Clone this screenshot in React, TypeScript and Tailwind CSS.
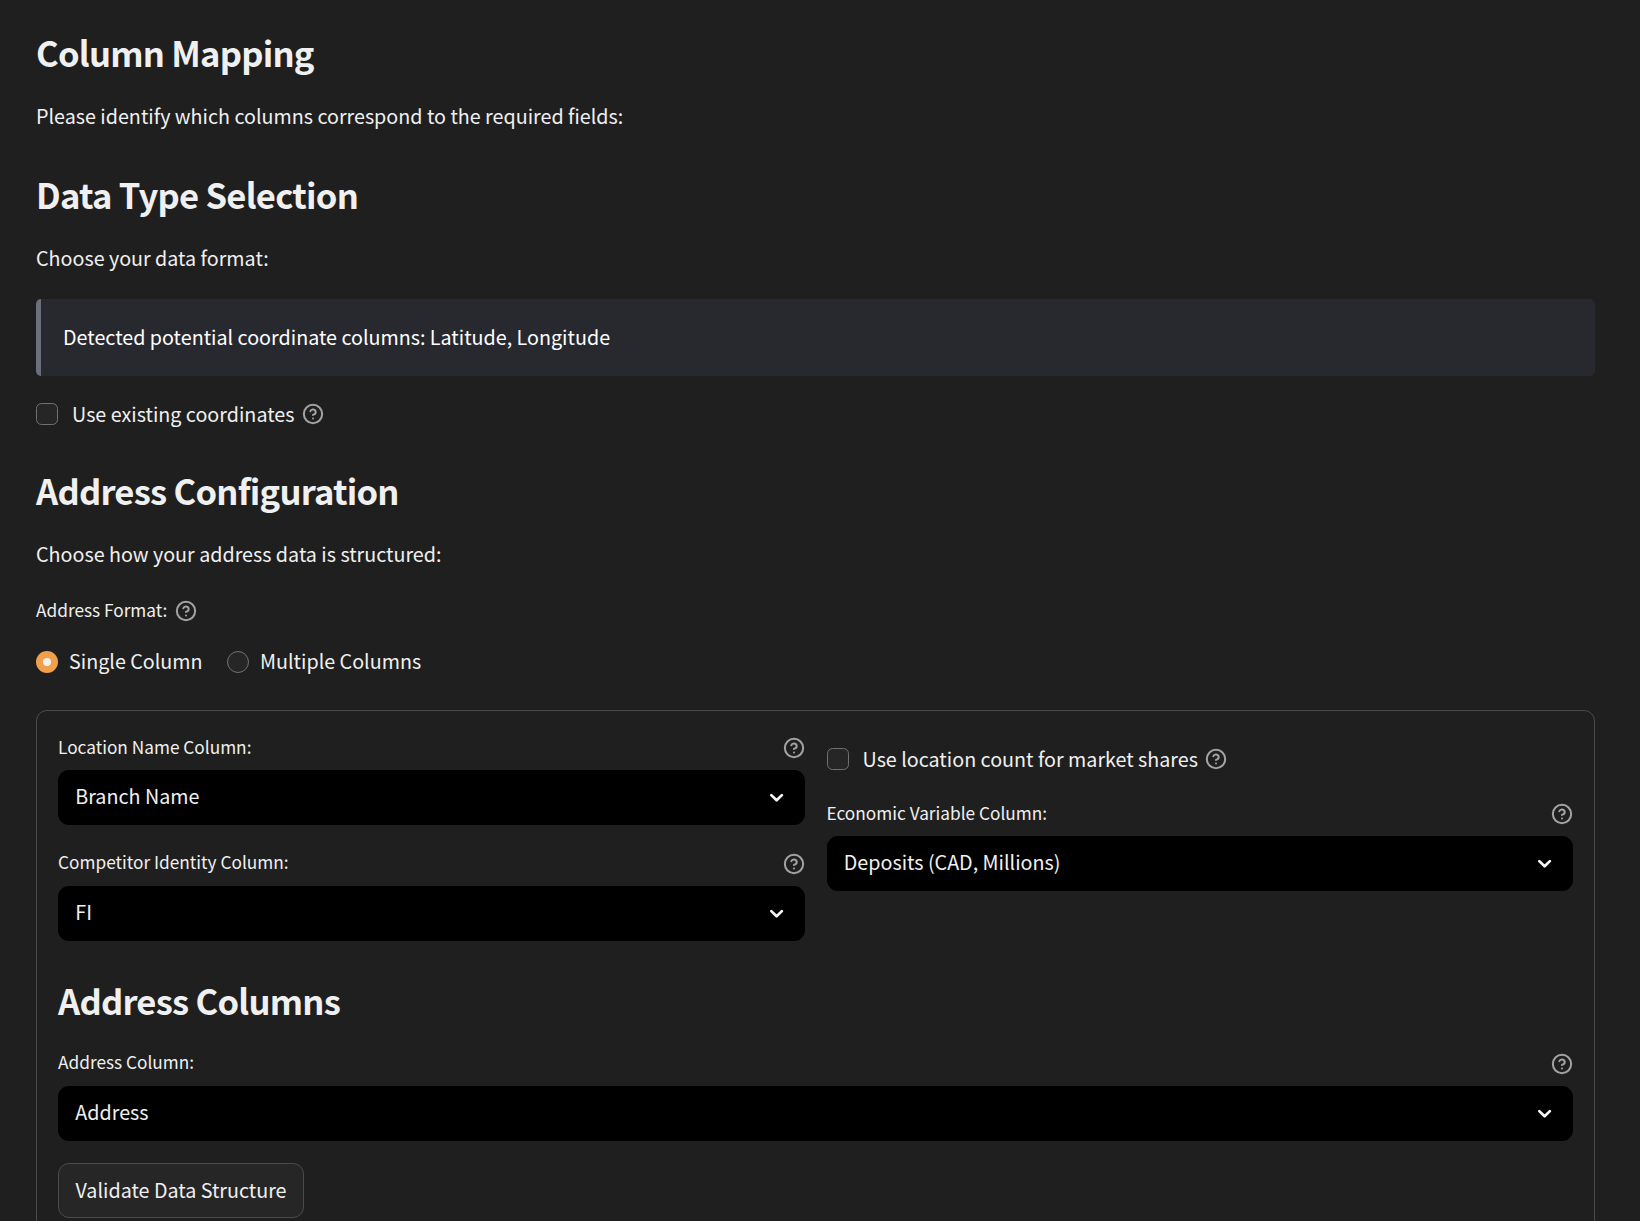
import type { ReactNode } from "react";

function HelpIcon() {
  return (
    <svg
      className="size-[22px] shrink-0 text-[#a3a3a3]"
      viewBox="0 0 24 24"
      fill="none"
      stroke="currentColor"
      strokeWidth="2.2"
      strokeLinecap="round"
      strokeLinejoin="round"
    >
      <circle cx="12" cy="12" r="10" />
      <path d="M9.09 9a3 3 0 0 1 5.83 1c0 2-3 3-3 3" />
      <path d="M12 17h.01" />
    </svg>
  );
}

function ChevronIcon() {
  return (
    <svg
      className="size-[22px] shrink-0 text-[#f5f5f5]"
      viewBox="0 0 22 22"
      fill="none"
      stroke="currentColor"
      strokeWidth="2.7"
      strokeLinecap="round"
      strokeLinejoin="round"
    >
      <path d="M5.3 8.1 10.6 13.3 15.9 8.1" />
    </svg>
  );
}

function Heading({ children, className }: { children: ReactNode; className?: string }) {
  return (
    <h2 className={`flex h-[46px] items-center whitespace-nowrap text-[34.6px] leading-none font-bold tracking-[-0.76px] text-[#f0f0f0] ${className ?? ""}`}>
      {children}
    </h2>
  );
}

function Paragraph({ children, className }: { children: ReactNode; className?: string }) {
  return <p className={`flex h-9 items-center pt-[2px] whitespace-nowrap ${className ?? ""}`}>{children}</p>;
}

function Checkbox({ label, className }: { label: string; className?: string }) {
  return (
    <label className={`flex h-9 items-center ${className ?? ""}`}>
      <span className="size-[22px] shrink-0 rounded-[5.5px] border border-[#717171] bg-[#262626]" />
      <span className="ml-[14px] whitespace-nowrap">{label}</span>
      <span className="ml-[7.4px]">
        <HelpIcon />
      </span>
    </label>
  );
}

function SelectField({
  label,
  value,
  className,
  labelClassName = "pb-[3px]",
}: {
  label: string;
  value: string;
  className?: string;
  labelClassName?: string;
}) {
  return (
    <div className={className}>
      <div className="flex h-7 items-center justify-between">
        <span className={`text-[17.25px] leading-none ${labelClassName}`}>{label}</span>
        <HelpIcon />
      </div>
      <div className="mt-2 flex h-[55px] items-center justify-between rounded-[11px] bg-black pr-[17px] pl-[17.3px]">
        <span className="pb-[3px]">{value}</span>
        <ChevronIcon />
      </div>
    </div>
  );
}

export default function App() {
  return (
    <div className="h-[1221px] overflow-hidden bg-[#1f1f1f] pt-[29px] pr-[45px] pl-9 font-['Noto_Sans_CJK_SC',sans-serif] text-[19.72px] leading-none text-[#f0f0f0]">
      <Heading>Column Mapping</Heading>
      <Paragraph className="mt-[22px]">Please identify which columns correspond to the required fields:</Paragraph>

      <Heading className="mt-[38px]">Data Type Selection</Heading>
      <Paragraph className="mt-[22px]">Choose your data format:</Paragraph>

      <div className="mt-6 flex h-[77px] items-center rounded-[5px] border-l-[5px] border-[#6c6e79] bg-[#28292f] pb-[2px] pl-[22px] text-white">
        Detected potential coordinate columns: Latitude, Longitude
      </div>

      <Checkbox className="mt-5" label="Use existing coordinates" />

      <Heading className="mt-[35px]">Address Configuration</Heading>
      <Paragraph className="mt-[22px]">Choose how your address data is structured:</Paragraph>

      <div className="mt-[26px] flex h-7 items-center text-[17.25px]">
        <span className="pb-[3px]">Address Format:</span>
        <span className="ml-[7.5px]">
          <HelpIcon />
        </span>
      </div>
      <div className="mt-[19px] flex h-9 items-center">
        <span className="flex size-[22px] items-center justify-center rounded-full bg-[#f0a04b]">
          <span className="size-[8px] rounded-full bg-[#f0f0f0]" />
        </span>
        <span className="ml-[11px] pb-[3px]">Single Column</span>
        <span className="ml-[24.5px] size-[22px] rounded-full border border-[#717171] bg-[#262626]" />
        <span className="ml-[11px] pb-[3px]">Multiple Columns</span>
      </div>

      <div className="mt-[30px] h-[560px] rounded-[11px] border border-[#4b4b4b] px-[21px] pt-[23px]">
        <div className="grid grid-cols-2 gap-[22px]">
          <div>
            <SelectField label="Location Name Column:" value="Branch Name" />
            <SelectField
              className="mt-[25px]"
              labelClassName="pb-[5px]"
              label="Competitor Identity Column:"
              value="FI"
            />
          </div>
          <div>
            <Checkbox className="mt-[7px]" label="Use location count for market shares" />
            <SelectField className="mt-[23px]" label="Economic Variable Column:" value="Deposits (CAD, Millions)" />
          </div>
        </div>
        <Heading className="mt-9">Address Columns</Heading>
        <SelectField className="mt-[27px]" labelClassName="pb-[5px]" label="Address Column:" value="Address" />
        <button className="mt-[22px] flex h-[55px] w-[246px] items-center justify-center rounded-[11px] border border-[#4b4b4b] bg-[#262626] pb-[2px] whitespace-nowrap">
          Validate Data Structure
        </button>
      </div>
    </div>
  );
}
